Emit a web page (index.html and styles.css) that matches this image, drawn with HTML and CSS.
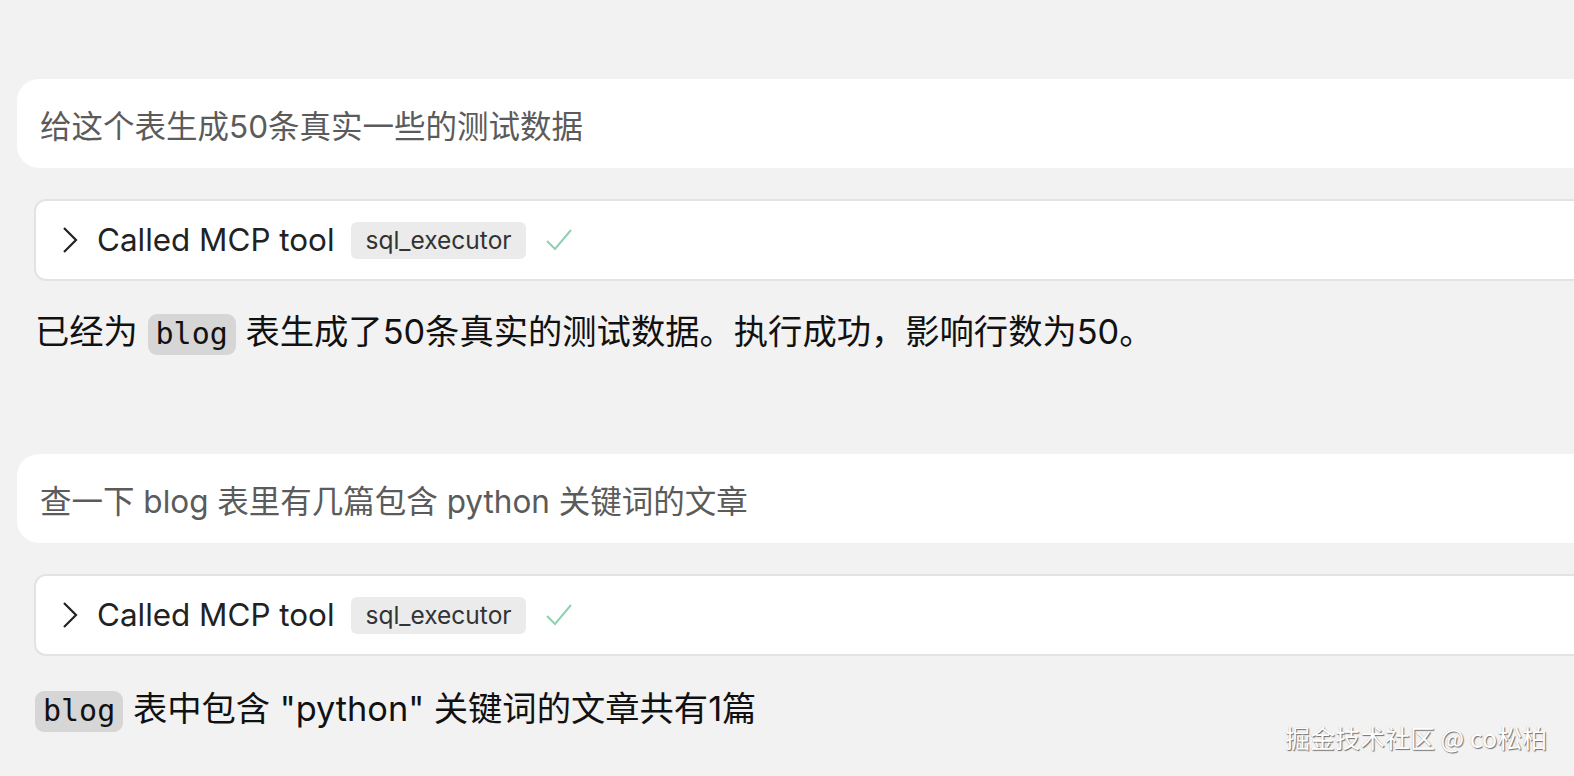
FILE: index.html
```html
<!DOCTYPE html>
<html lang="zh">
<head>
<meta charset="utf-8">
<link rel="stylesheet" href="styles.css">
</head>
<body>
<div class="chat">
  <div class="user-bubble">给这个表生成50条真实一些的测试数据</div>
  <div class="tool-card">
    <svg class="chev" width="16" height="26" viewBox="0 0 16 26"><path d="M2 1 L14 13 L2 25" fill="none" stroke="#222" stroke-width="2.2"/></svg>
    <span class="tool-label">Called MCP tool</span>
    <span class="tool-badge">sql_executor</span>
    <svg class="check" width="26" height="22" viewBox="0 0 26 22"><path d="M1 12 L9 20 L25 1" fill="none" stroke="#8fd1b1" stroke-width="2"/></svg>
  </div>
  <p class="reply">已经为 <code>blog</code> 表生成了50条真实的测试数据。执行成功，影响行数为50。</p>

  <div class="user-bubble">查一下 blog 表里有几篇包含 python 关键词的文章</div>
  <div class="tool-card">
    <svg class="chev" width="16" height="26" viewBox="0 0 16 26"><path d="M2 1 L14 13 L2 25" fill="none" stroke="#222" stroke-width="2.2"/></svg>
    <span class="tool-label">Called MCP tool</span>
    <span class="tool-badge">sql_executor</span>
    <svg class="check" width="26" height="22" viewBox="0 0 26 22"><path d="M1 12 L9 20 L25 1" fill="none" stroke="#8fd1b1" stroke-width="2"/></svg>
  </div>
  <p class="reply last"><code>blog</code> 表中包含 "python" 关键词的文章共有1篇</p>
</div>
<div class="watermark">掘金技术社区 @ co松柏</div>
</body>
</html>
```
FILE: styles.css
```css
html, body {
  margin: 0;
  padding: 0;
  background: #f2f2f2;
  overflow: hidden;
  height: 776px;
}
body {
  font-family: "Inter", "Noto Sans CJK SC", sans-serif;
  position: relative;
}
.chat {
  padding: 79px 0 0 17px;
  display: flex;
  flex-direction: column;
}
.user-bubble {
  background: #ffffff;
  border-radius: 22px 0 0 22px;
  height: 89px;
  box-sizing: border-box;
  display: flex;
  align-items: center;
  padding-left: 23px;
  font-size: 31.5px;
  color: #5b5b5b;
  white-space: nowrap;
}
.tool-card {
  margin: 31px 0 0 17px;
  height: 82px;
  box-sizing: border-box;
  background: #ffffff;
  border: 2px solid #e3e3e3;
  border-right: none;
  border-radius: 12px 0 0 12px;
  display: flex;
  align-items: center;
  padding-left: 26px;
}
.chev {
  flex: none;
}
.tool-label {
  margin-left: 19px;
  font-size: 31.4px;
  color: #222;
}
.tool-badge {
  margin-left: 17px;
  background: #ebebeb;
  border-radius: 6px;
  font-size: 24.5px;
  color: #333;
  height: 37px;
  line-height: 37px;
  padding: 0 14px;
}
.check {
  margin-left: 20px;
}
.reply {
  margin: 30px 0 101px 18px;
  font-size: 34.3px;
  line-height: 42px;
  color: #111;
  white-space: nowrap;
  height: 42px;
}
.reply.last {
  margin-top: 32px;
  margin-bottom: 0;
}
code {
  font-family: "DejaVu Sans Mono", monospace;
  font-size: 30px;
  background: #d6d6d6;
  border-radius: 9px;
  padding: 2px 8px 4px;
  color: #111;
}
.watermark {
  position: absolute;
  left: 1285px;
  top: 719px;
  font-family: "Noto Sans CJK SC", sans-serif;
  font-size: 25px;
  color: #ffffff;
  text-shadow: 1px 1px 1px rgba(0,0,0,0.55), -0.5px -0.5px 0 rgba(0,0,0,0.2);
  white-space: nowrap;
}
```
